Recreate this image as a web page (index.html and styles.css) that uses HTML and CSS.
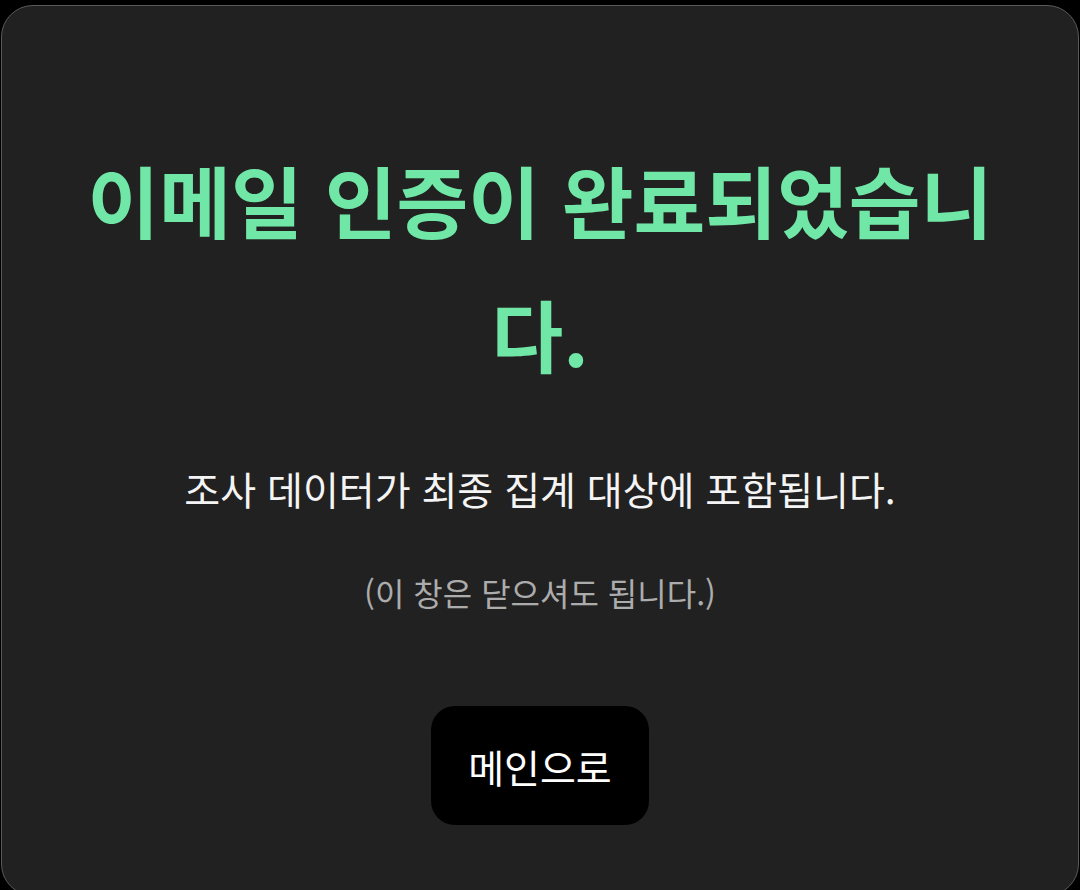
FILE: index.html
```html
<!DOCTYPE html>
<html lang="ko">
<head>
<meta charset="utf-8">
<title>이메일 인증 완료</title>
<link rel="stylesheet" href="styles.css">
</head>
<body>
<main class="card">
  <h1 class="title">이메일 인증이 완료되었습니다.</h1>
  <p class="desc">조사 데이터가 최종 집계 대상에 포함됩니다.</p>
  <p class="note">(이 창은 닫으셔도 됩니다.)</p>
  <a class="btn" href="#">메인으로</a>
</main>
</body>
</html>
```
FILE: styles.css
```css
html, body {
  margin: 0;
  padding: 0;
  background: #000;
  height: 100%;
  overflow: hidden;
}
body {
  font-family: "Noto Sans CJK KR", "Noto Sans", sans-serif;
  padding: 5px 1px 0 1px;
  box-sizing: border-box;
}
.card {
  box-sizing: border-box;
  background: #212121;
  border: 1.5px solid #5a5a5a;
  border-radius: 32px;
  height: 891px;
  padding: 126px 60px 0;
  display: flex;
  flex-direction: column;
  align-items: center;
  text-align: center;
}
.title {
  margin: 0;
  color: #70e7a6;
  font-size: 78px;
  font-weight: 700;
  line-height: 134px;
}
.desc {
  margin: 60px 0 0;
  color: #f4f4f4;
  font-size: 39px;
  line-height: 56px;
  font-weight: 400;
}
.note {
  margin: 53px 0 0;
  color: #acacac;
  font-size: 32px;
  line-height: 46px;
}
.btn {
  margin-top: 91px;
  display: flex;
  align-items: center;
  justify-content: center;
  width: 218px;
  height: 119px;
  border-radius: 24px;
  background: #000;
  color: #fff;
  font-size: 39px;
  text-decoration: none;
  font-weight: 400;
}
```
